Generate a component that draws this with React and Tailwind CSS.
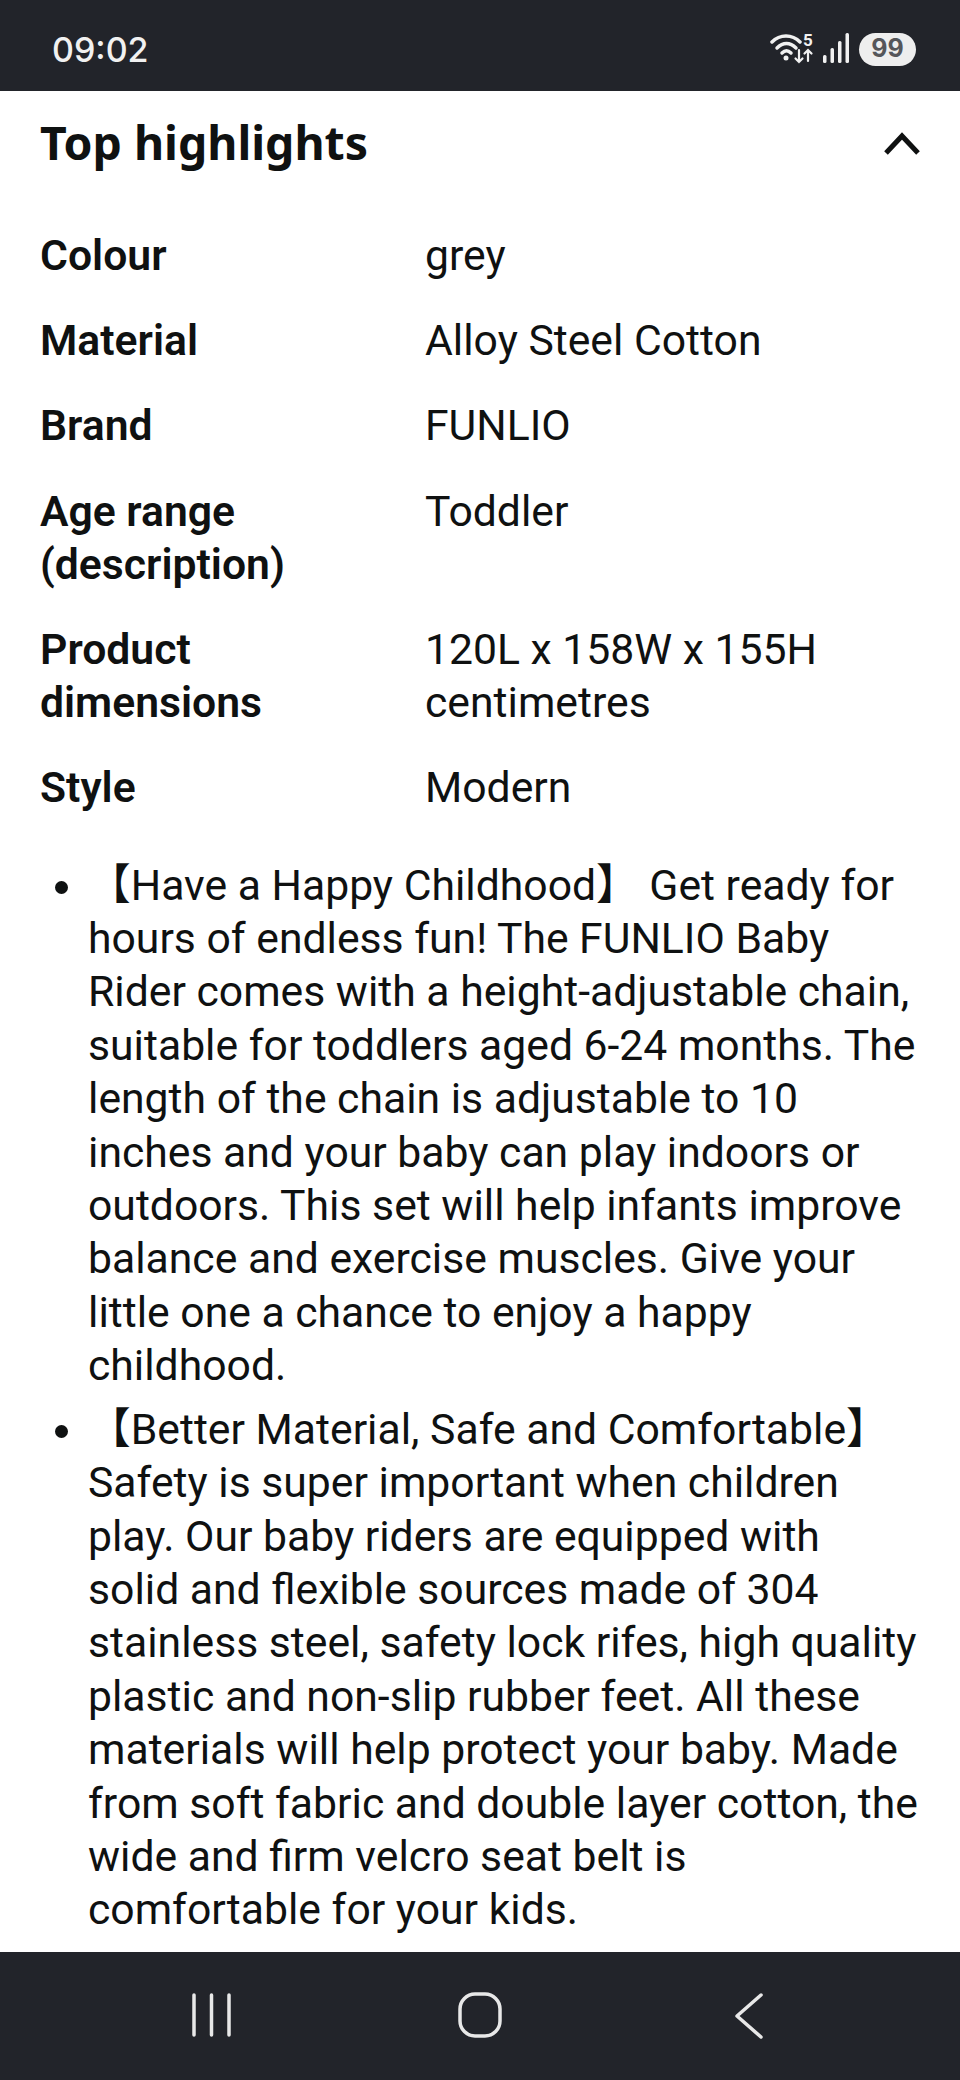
const specs = [
  ["Colour", "grey"],
  ["Material", "Alloy Steel Cotton"],
  ["Brand", "FUNLIO"],
  ["Age range (description)", "Toddler"],
  ["Product dimensions", "120L x 158W x 155H centimetres"],
  ["Style", "Modern"],
];

const bullets = [
  "【Have a Happy Childhood】 Get ready for hours of endless fun! The FUNLIO Baby Rider comes with a height-adjustable chain, suitable for toddlers aged 6-24 months. The length of the chain is adjustable to 10 inches and your baby can play indoors or outdoors. This set will help infants improve balance and exercise muscles. Give your little one a chance to enjoy a happy childhood.",
  "【Better Material, Safe and Comfortable】 Safety is super important when children play. Our baby riders are equipped with solid and flexible sources made of 304 stainless steel, safety lock rifes, high quality plastic and non-slip rubber feet. All these materials will help protect your baby. Made from soft fabric and double layer cotton, the wide and firm velcro seat belt is comfortable for your kids.",
];

function StatusIcons() {
  return (
    <div className="flex items-center">
      <div className="relative h-[34px] w-[44px]">
        <svg width="44" height="34" viewBox="0 0 44 34" fill="none" stroke="#f1f1f1" strokeLinecap="round">
          <path d="M2 10C10 2 22 2 30 10" strokeWidth="3.500" />
          <path d="M7 16C13 10 20 10 26 16" strokeWidth="3.500" />
          <path d="M12 21C15 18 18 18 21 21" strokeWidth="3.500" />
          <circle cx="16" cy="26" r="2.500" fill="#f1f1f1" stroke="none" />
          <path d="M29 18V30M25.500 26.500L29 30L32.500 26.500" strokeWidth="2.200" />
          <path d="M38 29V18M34.500 21.500L38 18L41.500 21.500" strokeWidth="2.200" />
        </svg>
        <span className="absolute left-[33px] top-0 text-[17px] leading-[16px] font-bold text-[#f1f1f1]">5</span>
      </div>
      <svg width="30" height="32" viewBox="0 0 30 32" fill="#f1f1f1" className="ml-[8px]">
        <rect x="1" y="22" width="3.500" height="8" rx="1.500" />
        <rect x="8.500" y="15" width="3.500" height="15" rx="1.500" />
        <rect x="16" y="8" width="3.500" height="22" rx="1.500" />
        <rect x="23.500" y="0" width="3.500" height="30" rx="1.500" />
      </svg>
      <div className="ml-[7px] flex h-[33px] w-[57px] items-center justify-center rounded-full bg-[#eeeeee] font-['Inter',sans-serif] text-[25px] font-bold text-[#55565a]">
        99
      </div>
    </div>
  );
}

function NavIcons() {
  return (
    <svg width="960" height="128" viewBox="0 0 960 128" fill="none" stroke="#e8e8e8" strokeLinecap="round" strokeLinejoin="round">
      <path d="M194 43V83M211.500 43V83M229 43V83" strokeWidth="3.500" />
      <rect x="460" y="42" width="40" height="42" rx="15" strokeWidth="3.500" />
      <path d="M761 43L737 64L761 85" strokeWidth="3.500" />
    </svg>
  );
}

export default function App() {
  return (
    <div className="flex h-[2080px] w-[960px] flex-col overflow-hidden bg-white font-['Roboto','Noto_Sans_CJK_SC',sans-serif] text-[#0f1111]">
      {/* status bar */}
      <div className="flex h-[91px] shrink-0 items-center justify-between bg-[#22242a] pl-[52px] pr-[44px] pt-[7px] text-[#f1f1f1]">
        <span className="font-['Inter',sans-serif] text-[34px] font-medium">09:02</span>
        <StatusIcons />
      </div>

      <main className="flex-1 overflow-hidden">
        {/* heading */}
        <div className="flex h-[104px] items-center justify-between pl-10 pr-[38px]">
          <h2 className="font-['Noto_Sans',sans-serif] text-[46.400px] font-bold">Top highlights</h2>
          <svg width="40" height="26" viewBox="0 0 40 26" fill="none" stroke="#0f1111" strokeWidth="5">
            <path d="M4 23L20 6L36 23" />
          </svg>
        </div>

        {/* spec table */}
        <div className="mt-[34px] flex flex-col gap-8 px-10 text-[42.700px] leading-[53.200px]">
          {specs.map(([label, value]) => (
            <div key={label} className="grid grid-cols-[385px_1fr]">
              <div className="w-[300px] font-semibold">{label}</div>
              <div>{value}</div>
            </div>
          ))}
        </div>

        {/* bullets */}
        <ul className="mt-[44px] flex list-disc flex-col gap-[10px] pl-[88px] pr-[41px] text-[42.700px] leading-[53.400px]">
          {bullets.map((b) => (
            <li key={b}>{b}</li>
          ))}
        </ul>
      </main>

      {/* nav bar */}
      <div className="h-[128px] shrink-0 bg-[#22242a]">
        <NavIcons />
      </div>
    </div>
  );
}
